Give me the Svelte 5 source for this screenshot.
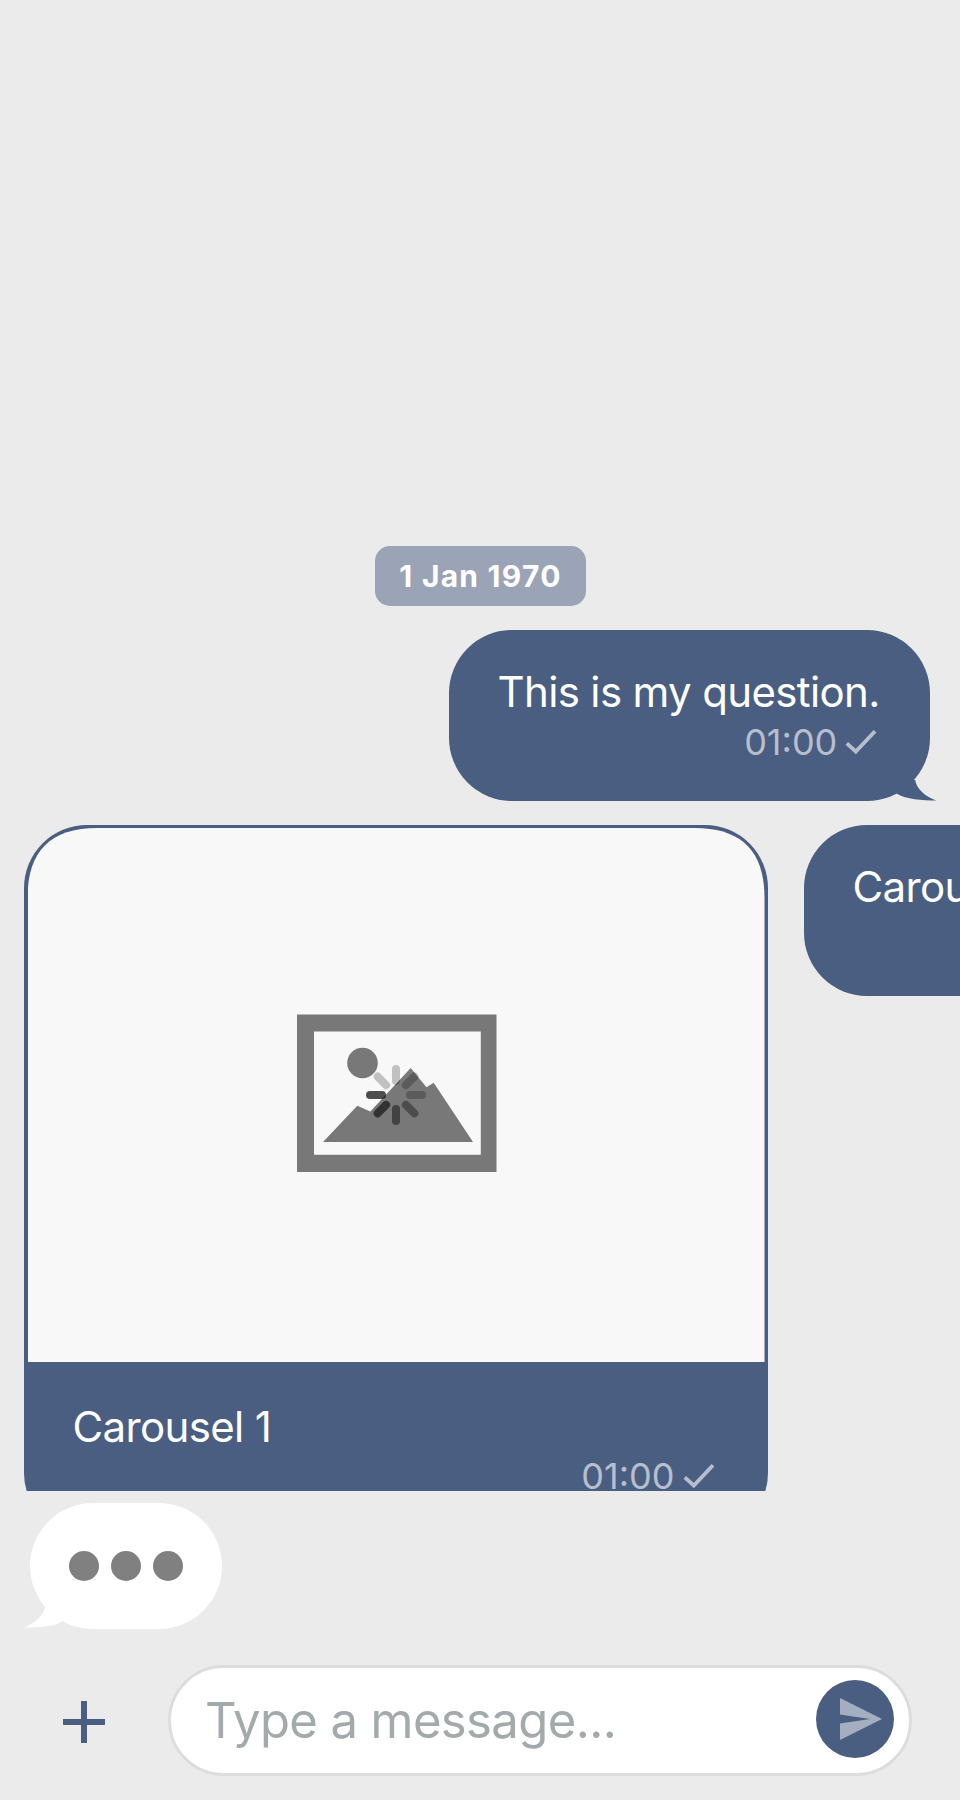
<script>
  const spokes = [
    { angle: 0, opacity: 0.22 },
    { angle: 45, opacity: 0.24 },
    { angle: 90, opacity: 0.24 },
    { angle: 135, opacity: 0.36 },
    { angle: 180, opacity: 0.45 },
    { angle: 225, opacity: 0.58 },
    { angle: 270, opacity: 0.69 },
    { angle: 315, opacity: 0.22 }
  ];
</script>

{#snippet stamp()}
  <div class="stamp">
    <span>01:00</span>
    <svg class="check" width="32" height="26" viewBox="0 0 32 26"><path d="M1.8 14.3 10.8 22.5 30 2.3" /></svg>
  </div>
{/snippet}

<main class="screen">
  <section class="messages">
    <div class="date">1 Jan 1970</div>

    <div class="bubble sent">
      <p>This is my question.</p>
      {@render stamp()}
      <svg class="tail-right" width="44" height="24" viewBox="0 0 44 24"><path d="M22.2 0C23 8 32 16.5 43.2 20.6C29 20.5 13 19 4.3 14L0 10V0Z" /></svg>
    </div>

    <div class="carousel">
      <article class="card">
        <div class="picture">
          <svg width="202" height="160" viewBox="296 1013 202 160">
            <path class="gray" fill-rule="evenodd" d="M297 1014.5H496.5V1172H297ZM314 1031.5V1154.7H480.8V1031.5Z" />
            <circle class="gray" cx="362.5" cy="1063" r="15.3" />
            <path class="gray" d="M323 1142 357.3 1105.7 370.3 1111.5 410.7 1068 426.5 1087.3 433.7 1082.7 473 1142Z" />
            {#each spokes as spoke}
              <rect x="392" y="1065" width="8" height="20" rx="4" opacity={spoke.opacity} transform={`rotate(${spoke.angle} 396 1095)`} />
            {/each}
          </svg>
        </div>
        <div class="caption">
          <p>Carousel 1</p>
          {@render stamp()}
        </div>
      </article>
      <div class="bubble next">
        <p>Carousel 2</p>
      </div>
    </div>
  </section>

  <div class="typing">
    <i></i><i></i><i></i>
    <svg class="tail-left" width="40" height="24" viewBox="0 0 40 24"><path d="M21.2 0C19 9 11 16 0 20.5C14 20.5 30 20 38.2 14.3L40 8V0Z" /></svg>
  </div>

  <footer class="composer">
    <svg class="plus" width="42" height="42" viewBox="0 0 42 42"><path d="M18 0h6v18h18v6H24v18h-6V24H0v-6h18z" /></svg>
    <div class="field">
      <span>Type a message...</span>
      <div class="send">
        <svg width="42" height="42" viewBox="0 0 42 42"><path d="M0 0 42 21 0 42V25.5L30 21 0 16.5Z" /></svg>
      </div>
    </div>
  </footer>
</main>

<style>
  :global(body) { margin: 0; background: #ebebeb; }
  .screen {
    width: 960px; height: 1800px; overflow: hidden; box-sizing: border-box;
    display: flex; flex-direction: column;
    background: #ebebeb; font-family: Inter, sans-serif;
  }
  .messages {
    height: 1491px; flex: none; box-sizing: border-box; overflow: hidden;
    padding-top: 546px; display: flex; flex-direction: column;
  }
  .date {
    align-self: center; flex: none; width: 211px; height: 60px; margin-bottom: 24px;
    border-radius: 15px; background: #9ba3b6; color: #fff; letter-spacing: 1.25px; text-indent: 1px;
    font-size: 30px; font-weight: 650; line-height: 61px; text-align: center;
  }
  .bubble {
    position: relative; flex: none; box-sizing: border-box; height: 171px;
    padding: 36px 50px 0 48.5px; border-radius: 63px; background: #4a5e81;
  }
  .sent { align-self: flex-end; width: 481.3px; margin: 0 29.7px 24px 0; }
  .next { width: 360px; }
  p {
    margin: 0; color: #fff; font-size: 42px; line-height: 51px;
    letter-spacing: -0.65px; white-space: nowrap;
  }
  .stamp {
    display: flex; justify-content: flex-end; align-items: center; gap: 8px;
    height: 44px; margin-top: 2.5px; color: #b7bfcd; font-size: 36px; line-height: 44px;
  }
  .caption .stamp { margin-top: 2px; }
  .check { fill: none; stroke: #b7bfcd; stroke-width: 3.8; }
  .sent .stamp { padding-right: 3px; }
  .tail-right { position: absolute; left: 443.7px; top: 149.8px; fill: #4a5e81; }
  .carousel { display: flex; align-items: flex-start; gap: 36px; padding-left: 24px; }
  .card {
    flex: none; box-sizing: border-box; width: 744px; height: 711px;
    padding: 3px 3.5px 0; border-radius: 63px; background: #4a5e81;
  }
  .picture {
    height: 534px; display: flex; align-items: center; justify-content: center;
    background: #f8f8f8;
    clip-path: path("M0 534V70C0 23 23 0 70 0H667C714 0 737 23 737 70V534Z");
  }
  .picture svg { margin: 0 0 4px 2px; }
  .gray { fill: #787878; }
  .caption { padding: 39px 50px 0 45px; }
  .typing {
    position: relative; flex: none; box-sizing: border-box; width: 192.5px; height: 126px;
    margin: 12px 0 0 29.5px; padding-left: 39.5px; display: flex; align-items: center; gap: 12px;
    border-radius: 63px; background: #fff;
  }
  .typing i { width: 30px; height: 30px; border-radius: 50%; background: #808080; }
  .tail-left { position: absolute; left: -5.5px; top: 104px; fill: #fff; }
  .composer { display: flex; align-items: center; height: 111px; margin-top: 36px; padding-left: 63px; }
  .plus { fill: #4a5e81; margin-top: 3px; }
  .field {
    box-sizing: border-box; width: 744px; height: 111px; margin-left: 63px; padding: 0 15px 0 34px;
    display: flex; align-items: center; justify-content: space-between;
    border: 3px solid #ddd; border-radius: 56px; background: #fff; color: #a2aaab;
    font-size: 49px; letter-spacing: -0.6px;
  }
  .send {
    width: 78px; height: 78px; margin-top: -3px; border-radius: 50%; background: #4a5e81;
    display: flex; align-items: center; justify-content: center;
  }
  .send svg { fill: #a5aec0; margin-left: 12px; }
</style>
